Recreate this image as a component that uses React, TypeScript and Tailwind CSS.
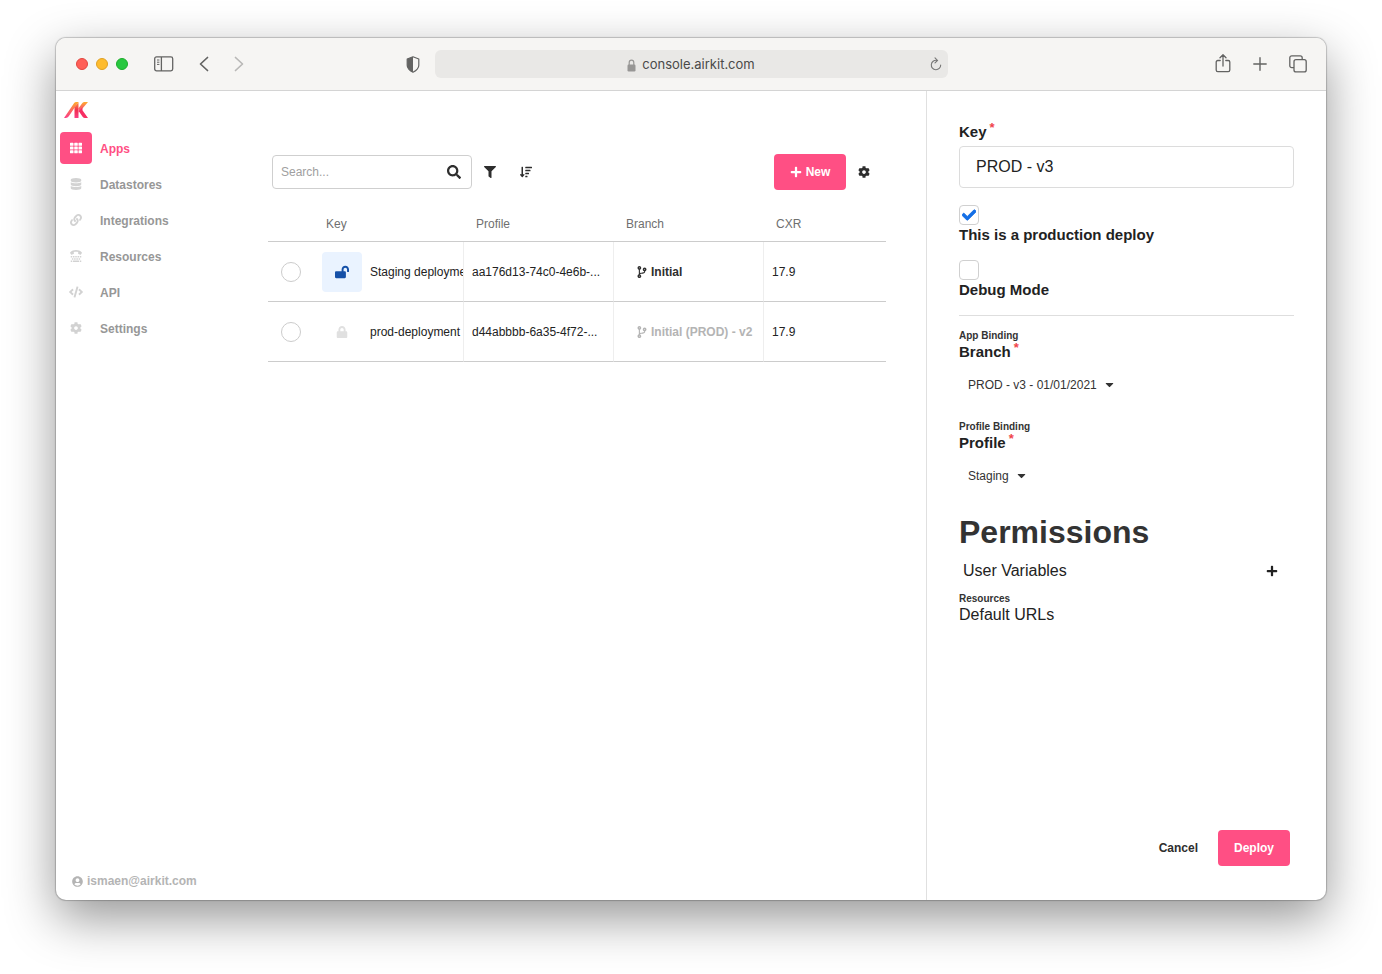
import { useState } from "react";
import type { ReactNode } from "react";
import {
  FaCaretDown,
  FaCheck,
  FaCode,
  FaCodeBranch,
  FaCog,
  FaDatabase,
  FaFilter,
  FaLink,
  FaLock,
  FaLockOpen,
  FaPlus,
  FaSearch,
  FaSortAmountDown,
  FaTh,
  FaTty,
  FaUserCircle,
} from "react-icons/fa";

function Logo() {
  return (
    <svg width="24" height="16" viewBox="0 0 24 16" aria-hidden="true">
      <defs>
        <linearGradient id="warm" x1="0" y1="0" x2="0" y2="1">
          <stop offset="0" stopColor="#ffae2e" />
          <stop offset="0.5" stopColor="#fb6a5c" />
          <stop offset="1" stopColor="#fb3f86" />
        </linearGradient>
        <linearGradient id="leg" x1="0" y1="0" x2="0" y2="1">
          <stop offset="0" stopColor="#ff9a3c" />
          <stop offset="0.5" stopColor="#f0304f" />
          <stop offset="1" stopColor="#fb3f86" />
        </linearGradient>
      </defs>
      <path d="M0 16 10 1.2Q10.8 0 12.2 0H14.5L4.8 14.2Q3.6 16 1.8 16Z" fill="url(#warm)" />
      <path d="M10.5 5.5 14.5 0V16H10.5Z" fill="url(#leg)" />
      <path d="M24 0H20.4Q19.2 0 18.4 1L14.5 6.2V10.5L16.5 8.8Z" fill="url(#warm)" />
      <path d="M18.3 5.6 14.8 9.2 18.6 14.8Q19.5 16 21 16H24L18.6 8.4Z" fill="#f72f63" />
    </svg>
  );
}

function Toolbar() {
  return (
    <header className="grid h-[53px] grid-cols-[1fr_513px_1fr] items-center border-b border-[#d4d4d4] bg-[#f6f5f3] text-[#636362]">
      <div className="flex items-center pr-[15px] pl-5">
        <div className="flex gap-2">
          <span className="size-3 rounded-full border border-[#e2463f] bg-[#ff5f57]" />
          <span className="size-3 rounded-full border border-[#e0a123] bg-[#febc2e]" />
          <span className="size-3 rounded-full border border-[#1dad2b] bg-[#28c840]" />
        </div>
        <button aria-label="Toggle sidebar" className="ml-[26px]">
          <svg width="20" height="16" viewBox="0 0 20 16" fill="none" stroke="currentColor" className="block">
            <rect x="0.7" y="0.9" width="18" height="14" rx="1.8" strokeWidth="1.3" />
            <path d="M7.4 1v14" strokeWidth="1.3" />
            <path d="M3 4h2.4M3 6.2h2.4M3 8.4h2.4" strokeWidth="1" />
          </svg>
        </button>
        <button aria-label="Back" className="ml-[25px]">
          <svg width="10" height="16" viewBox="0 0 10 16" fill="none" stroke="currentColor" strokeWidth="1.7" strokeLinecap="round" strokeLinejoin="round" className="block">
            <path d="M8.5 1.5 1.5 8l7 6.5" />
          </svg>
        </button>
        <button aria-label="Forward" className="ml-[25px] text-[#b9b8b7]">
          <svg width="10" height="16" viewBox="0 0 10 16" fill="none" stroke="currentColor" strokeWidth="1.7" strokeLinecap="round" strokeLinejoin="round" className="block">
            <path d="M1.5 1.5 8.5 8l-7 6.5" />
          </svg>
        </button>
        <button aria-label="Privacy report" className="ml-auto">
          <svg width="14" height="17" viewBox="0 0 14 17" className="block">
            <path d="M7 .8 12.8 3v6.2c0 3-2.3 5.2-5.8 7-3.5-1.8-5.8-4-5.8-7V3z" fill="none" stroke="currentColor" strokeWidth="1.2" strokeLinejoin="round" />
            <path d="M7 .8 1.2 3v6.2c0 3 2.3 5.2 5.8 7z" fill="currentColor" />
          </svg>
        </button>
      </div>
      <div className="grid h-7 grid-cols-[1fr_auto_1fr] items-center rounded-md bg-[#e9e8e6] px-1.5 font-['Inter',sans-serif] text-[13px] text-[#4a4a49]">
        <span className="col-start-2 flex items-center gap-1.5 pt-0.5">
          <svg width="9" height="13" viewBox="0 0 9 13" className="text-[#979695]">
            <rect x="0.5" y="5.5" width="8" height="7" rx="1.2" fill="currentColor" />
            <path d="M2.2 6V3.500a2.300 2.300 0 0 1 4.600 0V6" fill="none" stroke="currentColor" strokeWidth="1.2" />
          </svg>
          console.airkit.com
        </span>
        <button aria-label="Reload" className="justify-self-end">
          <svg width="12" height="14" viewBox="0 0 12 14" fill="none" stroke="#777776" strokeWidth="1.1" strokeLinecap="round" className="block">
            <path d="M6.800 3.400A4.700 4.700 0 1 0 10.700 8" />
            <path d="M5 .9 7.500 3.400 5 5.900" />
          </svg>
        </button>
      </div>
      <div className="flex items-center justify-end pr-[19px]">
        <button aria-label="Share" className="mr-[22px]">
          <svg width="16" height="20" viewBox="0 0 16 20" fill="none" stroke="currentColor" strokeWidth="1.3" strokeLinecap="round" strokeLinejoin="round" className="block">
            <path d="M5.200 6.500H2.800a1.600 1.600 0 0 0-1.600 1.600v7.900a1.600 1.600 0 0 0 1.600 1.600h10.400a1.600 1.600 0 0 0 1.600-1.600V8.100A1.600 1.600 0 0 0 13.200 6.500h-2.400" />
            <path d="M8 12V.9M5 3.800l3-3 3 3" />
          </svg>
        </button>
        <button aria-label="New tab" className="mr-[22px]">
          <svg width="14" height="14" viewBox="0 0 14 14" stroke="currentColor" strokeWidth="1.4" strokeLinecap="round" className="block">
            <path d="M7 .8v12.400M.8 7h12.400" />
          </svg>
        </button>
        <button aria-label="Show tabs">
          <svg width="18" height="18" viewBox="0 0 18 18" fill="none" stroke="currentColor" strokeWidth="1.3" className="block">
            <rect x="5" y="4.700" width="12.200" height="12.200" rx="2" />
            <path d="M5 12.700H2.800a2 2 0 0 1-2-2V2.800a2 2 0 0 1 2-2h8.400a2 2 0 0 1 2 2v1.900" />
          </svg>
        </button>
      </div>
    </header>
  );
}

const links = [
  { label: "Apps", icon: <FaTh size={12} />, active: true },
  { label: "Datastores", icon: <FaDatabase size={12} />, active: false },
  { label: "Integrations", icon: <FaLink size={12} />, active: false },
  { label: "Resources", icon: <FaTty size={12} />, active: false },
  { label: "API", icon: <FaCode size={14} />, active: false },
  { label: "Settings", icon: <FaCog size={12} />, active: false },
];

function Sidebar() {
  return (
    <aside className="flex w-[172px] shrink-0 flex-col px-1 pt-[11px] pb-[11px] text-xs font-bold">
      <a href="#home" aria-label="Home" className="ml-1 block h-[30px]">
        <Logo />
      </a>
      <nav className="flex flex-col gap-1">
        {links.map((link) => (
          <a
            key={link.label}
            href="#section"
            className={`flex items-center gap-2 ${link.active ? "text-[#ff4f84]" : "text-[#979797]"}`}
          >
            <span
              className={`flex size-8 items-center justify-center rounded ${
                link.active ? "bg-[#ff4f84] text-white" : "text-[#d2d2d2]"
              }`}
            >
              {link.icon}
            </span>
            <span className="pt-0.5">{link.label}</span>
          </a>
        ))}
      </nav>
      <a href="#account" className="mt-auto ml-3 flex items-center gap-1 text-[#b4b4b4]">
        <FaUserCircle size={11} />
        ismaen@airkit.com
      </a>
    </aside>
  );
}

const deployments = [
  { key: "Staging deployment", open: true, profile: "aa176d13-74c0-4e6b-...", branch: "Initial", cxr: "17.9" },
  { key: "prod-deployment", open: false, profile: "d44abbbb-6a35-4f72-...", branch: "Initial (PROD) - v2", cxr: "17.9" },
];

function Deployments() {
  return (
    <main className="min-w-0 flex-1 px-10 pt-[63px] text-xs text-[#222]">
      <div className="flex items-center px-1 text-[#2e2e2e]">
        <label className="flex h-[34px] w-[200px] items-center rounded border border-[#cfcfcf] px-2">
          <input type="search" aria-label="Search" placeholder="Search..." className="min-w-0 flex-1 outline-none placeholder:text-[#a0a0a0]" />
          <FaSearch size={14} className="mr-0.5" />
        </label>
        <button aria-label="Filter" className="flex size-9 items-center justify-center">
          <FaFilter size={12} />
        </button>
        <button aria-label="Sort" className="flex size-9 items-center justify-center">
          <FaSortAmountDown size={12} />
        </button>
        <button className="ml-auto flex h-9 w-[72px] items-center justify-center gap-1 rounded bg-[#ff4f84] font-bold text-white">
          <FaPlus size={12} />
          New
        </button>
        <button aria-label="Table settings" className="flex size-9 items-center justify-center">
          <FaCog size={12} />
        </button>
      </div>
      <table className="mt-4 w-full table-fixed border-separate border-spacing-0">
        <colgroup>
          <col className="w-[46px]" />
          <col className="w-[150px]" />
          <col className="w-[150px]" />
          <col className="w-[150px]" />
          <col />
        </colgroup>
        <thead>
          <tr className="h-9 text-left text-[#6f6f6f] *:border-b *:border-b-[#cccccc]">
            <td />
            <th className="px-3 font-normal">Key</th>
            <th className="px-3 font-normal">Profile</th>
            <th className="px-3 font-normal">Branch</th>
            <th className="px-3 font-normal">CXR</th>
          </tr>
        </thead>
        <tbody>
          {deployments.map((row) => (
            <tr key={row.key} className="h-[60px] *:border-b *:border-b-[#cccccc]">
              <td className="p-0">
                <input
                  type="radio"
                  name="deployment"
                  aria-label={row.key}
                  className="mx-auto block size-5 appearance-none rounded-full border border-[#cccccc] checked:bg-[#ff4f84]"
                />
              </td>
              <td className="border-r border-r-[#eeeeee] p-0 pl-2">
                <div className="flex items-center gap-2 overflow-hidden whitespace-nowrap">
                  <span
                    className={`flex size-10 shrink-0 items-center justify-center rounded ${
                      row.open ? "bg-[#eaf3ff] text-[#1550a8]" : "text-[#e0e0e0]"
                    }`}
                  >
                    {row.open ? <FaLockOpen size={14} /> : <FaLock size={12} />}
                  </span>
                  {row.key}
                </div>
              </td>
              <td className="truncate border-r border-r-[#eeeeee] px-2">{row.profile}</td>
              <td className="border-r border-r-[#eeeeee] p-0 pl-[22px]">
                <a
                  href="#branch"
                  className={`flex items-center gap-[3px] font-bold whitespace-nowrap ${row.open ? "text-[#2e2e2e]" : "text-[#b4b4b4]"}`}
                >
                  <FaCodeBranch size={12} />
                  {row.branch}
                </a>
              </td>
              <td className="px-2">{row.cxr}</td>
            </tr>
          ))}
        </tbody>
      </table>
    </main>
  );
}

function Required() {
  return <span className="ml-[3px] self-start text-[13px] leading-3 text-[#f0434a]">*</span>;
}

function Tick({ id, label, initial }: { id: string; label: string; initial: boolean }) {
  const [on, setOn] = useState(initial);
  return (
    <div className="flex flex-col">
      <span className="grid size-5 place-items-center">
        <input
          id={id}
          type="checkbox"
          checked={on}
          onChange={(e) => setOn(e.target.checked)}
          className="col-start-1 row-start-1 size-5 appearance-none rounded border border-[#d0d0d0]"
        />
        {on && (
          <FaCheck
            size={14}
            stroke="#146fe6"
            strokeWidth={36}
            className="pointer-events-none col-start-1 row-start-1 text-[#146fe6]"
          />
        )}
      </span>
      <label htmlFor={id} className="text-[15px] leading-5 font-bold">
        {label}
      </label>
    </div>
  );
}

function Binding({ id, title, label, children }: { id: string; title: string; label: string; children: ReactNode }) {
  return (
    <div className="flex flex-col">
      <h2 className="text-[10px] leading-3 font-bold text-[#333]">{title}</h2>
      <label htmlFor={id} className="flex items-center text-[15px] leading-5 font-bold">
        {label}
        <Required />
      </label>
      <div className="mt-2.5 flex h-[25px] items-center gap-1.5 pl-[9px] text-xs text-[#333]">
        <select id={id} className="field-sizing-content appearance-none bg-transparent">
          {children}
        </select>
        <FaCaretDown size={13} className="pointer-events-none" />
      </div>
    </div>
  );
}

function DeployPanel() {
  return (
    <form className="flex w-[400px] shrink-0 flex-col border-l border-[#e0e0e0] pt-[31px] pr-8 pb-[34px] pl-8 text-[#222]">
      <label htmlFor="key" className="flex items-center text-[15px] leading-5 font-bold">
        Key
        <Required />
      </label>
      <input id="key" defaultValue="PROD - v3" className="mt-1 h-[42px] rounded border border-[#dcdcdc] px-4 text-base outline-none" />
      <div className="mt-[17px] flex flex-col gap-[15px] border-b border-[#dedede] pb-[15px]">
        <Tick id="production" label="This is a production deploy" initial={true} />
        <Tick id="debug" label="Debug Mode" initial={false} />
      </div>
      <div className="mt-3.5 flex flex-col gap-6">
        <Binding id="branch" title="App Binding" label="Branch">
          <option>PROD - v3 - 01/01/2021</option>
        </Binding>
        <Binding id="profile" title="Profile Binding" label="Profile">
          <option>Staging</option>
        </Binding>
      </div>
      <h1 className="mt-6 text-[32px] leading-10 font-bold text-[#333]">Permissions</h1>
      <div className="mt-[7px] flex items-center justify-between pr-4 pl-1 text-base leading-6">
        User Variables
        <button type="button" aria-label="Add user variable">
          <FaPlus size={12} />
        </button>
      </div>
      <h2 className="mt-2.5 text-[10px] leading-3 font-bold text-[#333]">Resources</h2>
      <p className="text-base leading-5">Default URLs</p>
      <div className="mt-auto flex justify-end gap-1 pr-1 text-xs font-bold">
        <button type="button" className="h-9 px-4 text-[#2e2e2e]">
          Cancel
        </button>
        <button type="button" className="h-9 w-[72px] rounded bg-[#ff4f84] text-white">
          Deploy
        </button>
      </div>
    </form>
  );
}

export default function App() {
  return (
    <div className="flex min-h-screen bg-white px-14 pt-[38px] pb-[74px] font-['Liberation_Sans',Arial,sans-serif]">
      <div className="flex min-w-0 flex-1 flex-col overflow-hidden rounded-[10px] bg-white shadow-[0_0_1px_1px_rgba(0,0,0,0.2),0_18px_50px_rgba(0,0,0,0.42)]">
        <Toolbar />
        <div className="flex flex-1">
          <Sidebar />
          <Deployments />
          <DeployPanel />
        </div>
      </div>
    </div>
  );
}
